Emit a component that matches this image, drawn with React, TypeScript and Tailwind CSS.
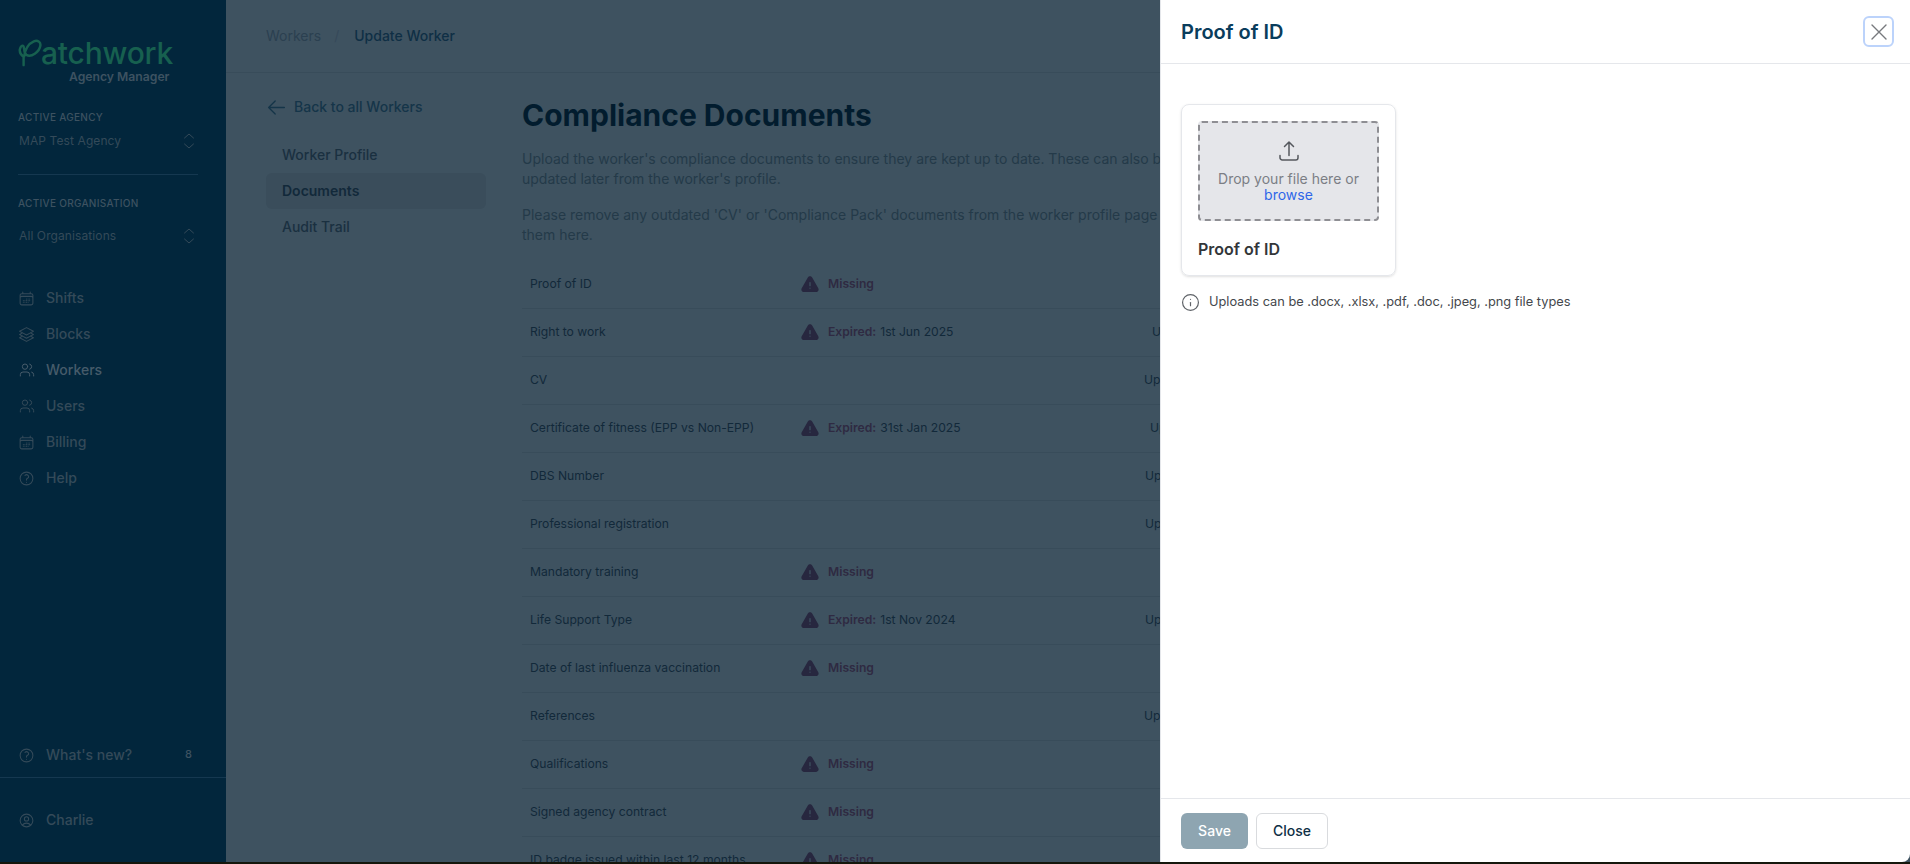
import { Info, Users } from "lucide-react";
import {
  HiExclamationTriangle,
  HiOutlineArrowLeft,
  HiOutlineArrowUpTray,
  HiOutlineCalendarDays,
  HiOutlineQuestionMarkCircle,
  HiOutlineSquare3Stack3D,
  HiOutlineUserCircle,
} from "react-icons/hi2";

const navItems = [
  { label: "Shifts", icon: "calendar" },
  { label: "Blocks", icon: "layers" },
  { label: "Workers", icon: "users", active: true },
  { label: "Users", icon: "users" },
  { label: "Billing", icon: "calendar" },
  { label: "Help", icon: "help" },
];

// pad = where the action text starts, the drawer cuts most of it off
const rows = [
  { label: "Proof of ID", status: "missing" },
  { label: "Right to work", status: "expired", date: "1st Jun 2025", action: "Update", pad: "pl-[52px]" },
  { label: "CV", action: "Upload", pad: "pl-[44px]" },
  { label: "Certificate of fitness (EPP vs Non-EPP)", status: "expired", date: "31st Jan 2025", action: "Update", pad: "pl-[50px]" },
  { label: "DBS Number", action: "Upload", pad: "pl-[45px]" },
  { label: "Professional registration", action: "Upload", pad: "pl-[45px]" },
  { label: "Mandatory training", status: "missing" },
  { label: "Life Support Type", status: "expired", date: "1st Nov 2024", action: "Upload", pad: "pl-[45px]" },
  { label: "Date of last influenza vaccination", status: "missing" },
  { label: "References", action: "Upload", pad: "pl-[44px]" },
  { label: "Qualifications", status: "missing" },
  { label: "Signed agency contract", status: "missing" },
  { label: "ID badge issued within last 12 months", status: "missing" },
];

function NavIcon({ name }: { name: string }) {
  if (name === "calendar") return <HiOutlineCalendarDays className="w-[17px] h-[17px] -ml-[1px] shrink-0" />;
  if (name === "layers") return <HiOutlineSquare3Stack3D className="w-[17px] h-[17px] -ml-[1px] shrink-0" />;
  if (name === "users") return <Users className="w-[16px] h-[16px] shrink-0" strokeWidth={1.5} />;
  return <HiOutlineQuestionMarkCircle className="w-[17px] h-[17px] -ml-[1px] shrink-0" />;
}

function UpDown() {
  return (
    <svg viewBox="0 0 12 16" className="w-[12px] h-[16px] mr-[3px] -translate-x-[10px]" fill="none" stroke="currentColor" strokeWidth="1" strokeLinecap="round" strokeLinejoin="round">
      <path d="M1.500 5L6 1L10.500 5" />
      <path d="M1.500 11L6 15L10.500 11" />
    </svg>
  );
}

function Logo() {
  return (
    <div className="pl-[18px] pt-[38px] h-[104px] shrink-0">
      <div className="flex items-end h-[30px] w-[156px]">
        <svg viewBox="0 0 30 30" className="w-[28px] h-[30px] shrink-0 text-[#17604f]" fill="none" stroke="currentColor" strokeWidth="2.6">
          <path d="M6 28V19C3 17 1.500 14 2 11C2.600 7.500 5 6 6 8C7 10 6 15 9 17C14 20 23 14 24 7C24.500 3 21 1 17 2.500C11 5 7.500 12 6.500 19" strokeLinecap="round" />
        </svg>
        <span className="text-[30px] leading-[30px] font-medium text-[#17604f] -ml-[5px] tracking-[-0.2px]">atchwork</span>
      </div>
      <div className="text-[12.2px] leading-[14px] font-semibold text-[#3d5261] pl-[51px] mt-[2px]">Agency Manager</div>
    </div>
  );
}

function Sidebar() {
  return (
    <aside className="w-[226px] shrink-0 bg-[#02263c] flex flex-col text-[#3d5261]">
      <Logo />
      <div className="px-[18px]">
        <div className="text-[10px] leading-4 tracking-[0.3px] font-medium mt-[5px]">ACTIVE AGENCY</div>
        <div className="flex items-center justify-between h-[34px] pl-[1px] mt-[-1px] mb-[16px] text-[12px] tracking-[0.1px] text-[#344a59]">
          <span>MAP Test Agency</span>
          <UpDown />
        </div>
        <div className="border-t border-[#153850] w-[180px]" />
        <div className="text-[10px] leading-4 tracking-[0.3px] font-medium mt-[20px]">ACTIVE ORGANISATION</div>
        <div className="flex items-center justify-between h-[34px] pl-[1px] mt-[8px] text-[12px] tracking-[0.1px] text-[#344a59]">
          <span>All Organisations</span>
          <UpDown />
        </div>
      </div>
      <nav className="mt-[27px] px-[18px]">
        {navItems.map((item) => (
          <div key={item.label} className={`h-9 flex items-center gap-[11px] pl-[1px] text-sm font-medium ${item.active ? "text-[#465b6a]" : "text-[#344a59]"}`}>
            <NavIcon name={item.icon} />
            <span>{item.label}</span>
          </div>
        ))}
      </nav>
      <div className="mt-auto">
        <div className="h-9 flex items-center justify-between pl-[18px] pr-[34px] mb-[4px] text-sm font-medium text-[#344a59]">
          <span className="flex items-center gap-[11px]">
            <HiOutlineQuestionMarkCircle className="w-[17px] h-[17px]" />
            What's new?
          </span>
          <span className="text-[11px] text-[#3d5261]">8</span>
        </div>
        <div className="border-t border-[#153850] h-[85px] flex items-center gap-[11px] pl-[18px] text-sm font-medium text-[#344a59]">
          <HiOutlineUserCircle className="w-[17px] h-[17px]" />
          Charlie
        </div>
      </div>
    </aside>
  );
}

function StatusCell({ status, date }: { status?: string; date?: string }) {
  if (!status) return null;
  return (
    <div className="flex items-center gap-[8px]">
      <HiExclamationTriangle className="w-[20px] h-[20px] text-[#27273f]" />
      <span className="font-semibold text-[#2f2a42]">{status === "missing" ? "Missing" : "Expired:"}</span>
      {date && <span className="text-[#12293a] -ml-[4px]">{date}</span>}
    </div>
  );
}

function MainContent() {
  return (
    <main className="flex-1 min-w-0 bg-[#3e5260] overflow-hidden">
      <div className="h-[73px] border-b border-[#384c5a] flex items-center pl-[40px] text-sm">
        <span className="text-[#2b4050]">Workers</span>
        <span className="text-[#36495a] ml-[13px] mr-[15px]">/</span>
        <span className="font-medium text-[#0f2f45]">Update Worker</span>
      </div>
      <div className="flex pl-[40px]">
        <div className="w-[256px] shrink-0 pt-[24px]">
          <div className="flex items-center gap-[7px] h-[20px] text-sm font-medium text-[#153549]">
            <HiOutlineArrowLeft className="w-[21px] h-[21px]" />
            Back to all Workers
          </div>
          <div className="mt-[20px] w-[220px] text-sm text-[#1a3040] font-medium">
            <div className="h-9 flex items-center px-4">Worker Profile</div>
            <div className="h-9 flex items-center px-4 rounded-md bg-[#3a4d5b] font-semibold text-[#12293a]">Documents</div>
            <div className="h-9 flex items-center px-4">Audit Trail</div>
          </div>
        </div>
        <div className="w-[900px] shrink-0 pt-[22px]">
          <h1 className="text-[30px] leading-[40px] font-bold text-[#021c2e]">Compliance Documents</h1>
          <p className="mt-[14px] text-sm leading-5 text-[#243a49] whitespace-nowrap">
            Upload the worker's compliance documents to ensure they are kept up to date. These can also be
            <br />
            updated later from the worker's profile.
          </p>
          <p className="mt-4 text-sm leading-5 text-[#243a49] whitespace-nowrap">
            Please remove any outdated 'CV' or 'Compliance Pack' documents from the worker profile page before adding
            <br />
            them here.
          </p>
          <div className="mt-[16px] text-[12.15px]">
            {rows.map((r) => (
              <div key={r.label} className="h-[48px] border-b border-[#384c5a] flex items-center pl-2 text-[#12293a]">
                <div className="w-[270px] shrink-0">{r.label}</div>
                <div className="w-[300px] shrink-0">
                  <StatusCell status={r.status} date={r.date} />
                </div>
                {r.action && <div className={r.pad}>{r.action}</div>}
              </div>
            ))}
          </div>
        </div>
      </div>
    </main>
  );
}

function Drawer() {
  return (
    <section className="absolute right-0 top-0 bottom-[2px] w-[750px] bg-white border-l border-[#e5e7eb] rounded-br-lg flex flex-col">
      <header className="h-[64px] shrink-0 border-b border-[#e5e7eb] flex items-center justify-between pl-[20px] pr-[16px]">
        <h2 className="text-xl font-semibold text-[#0a3d5c]">Proof of ID</h2>
        <button className="w-[31px] h-[31px] flex items-center justify-center rounded-md border-2 border-[#bcd3fb] text-[#77797d]">
          <svg viewBox="0 0 16 16" className="w-[16px] h-[16px]" fill="none" stroke="currentColor" strokeWidth="1.4" strokeLinecap="round">
            <path d="M1 1L15 15M15 1L1 15" />
          </svg>
        </button>
      </header>
      <div className="flex-1 pt-[40px] pl-[20px]">
        <div className="w-[215px] h-[172px] rounded-lg border border-[#e5e7eb] shadow-sm p-4">
          <div className="h-[100px] rounded border-2 border-dashed border-[#8e8e93] bg-[#e5e6ea] flex flex-col items-center pt-[16px] text-sm leading-4 text-[#7b7e85]">
            <HiOutlineArrowUpTray className="w-[24px] h-[24px] text-[#55585e] mb-[8px]" />
            <span>Drop your file here or</span>
            <span className="text-[#2f66e8]">browse</span>
          </div>
          <div className="mt-[18px] text-base leading-5 font-semibold text-[#333639]">Proof of ID</div>
        </div>
        <div className="mt-[16px] flex items-center gap-[9px] text-[12.8px] leading-5 text-[#44474c]">
          <Info className="w-[19px] h-[19px] text-[#5f6368]" strokeWidth={1.5} />
          <span>Uploads can be .docx, .xlsx, .pdf, .doc, .jpeg, .png file types</span>
        </div>
      </div>
      <footer className="h-[64px] shrink-0 border-t border-[#e5e7eb] flex items-center gap-2 pl-[20px]">
        <button className="w-[67px] h-9 rounded-md bg-[#8ea5b1] text-white text-sm font-medium">Save</button>
        <button className="w-[72px] h-9 rounded-md border border-[#d9dbde] text-[#0f2f45] text-sm font-medium">Close</button>
      </footer>
    </section>
  );
}

export default function App() {
  return (
    <div className="relative w-[1910px] h-[864px] overflow-hidden bg-[#15170c] font-['Inter',sans-serif]">
      <div className="flex h-[862px]">
        <Sidebar />
        <MainContent />
      </div>
      <Drawer />
    </div>
  );
}
